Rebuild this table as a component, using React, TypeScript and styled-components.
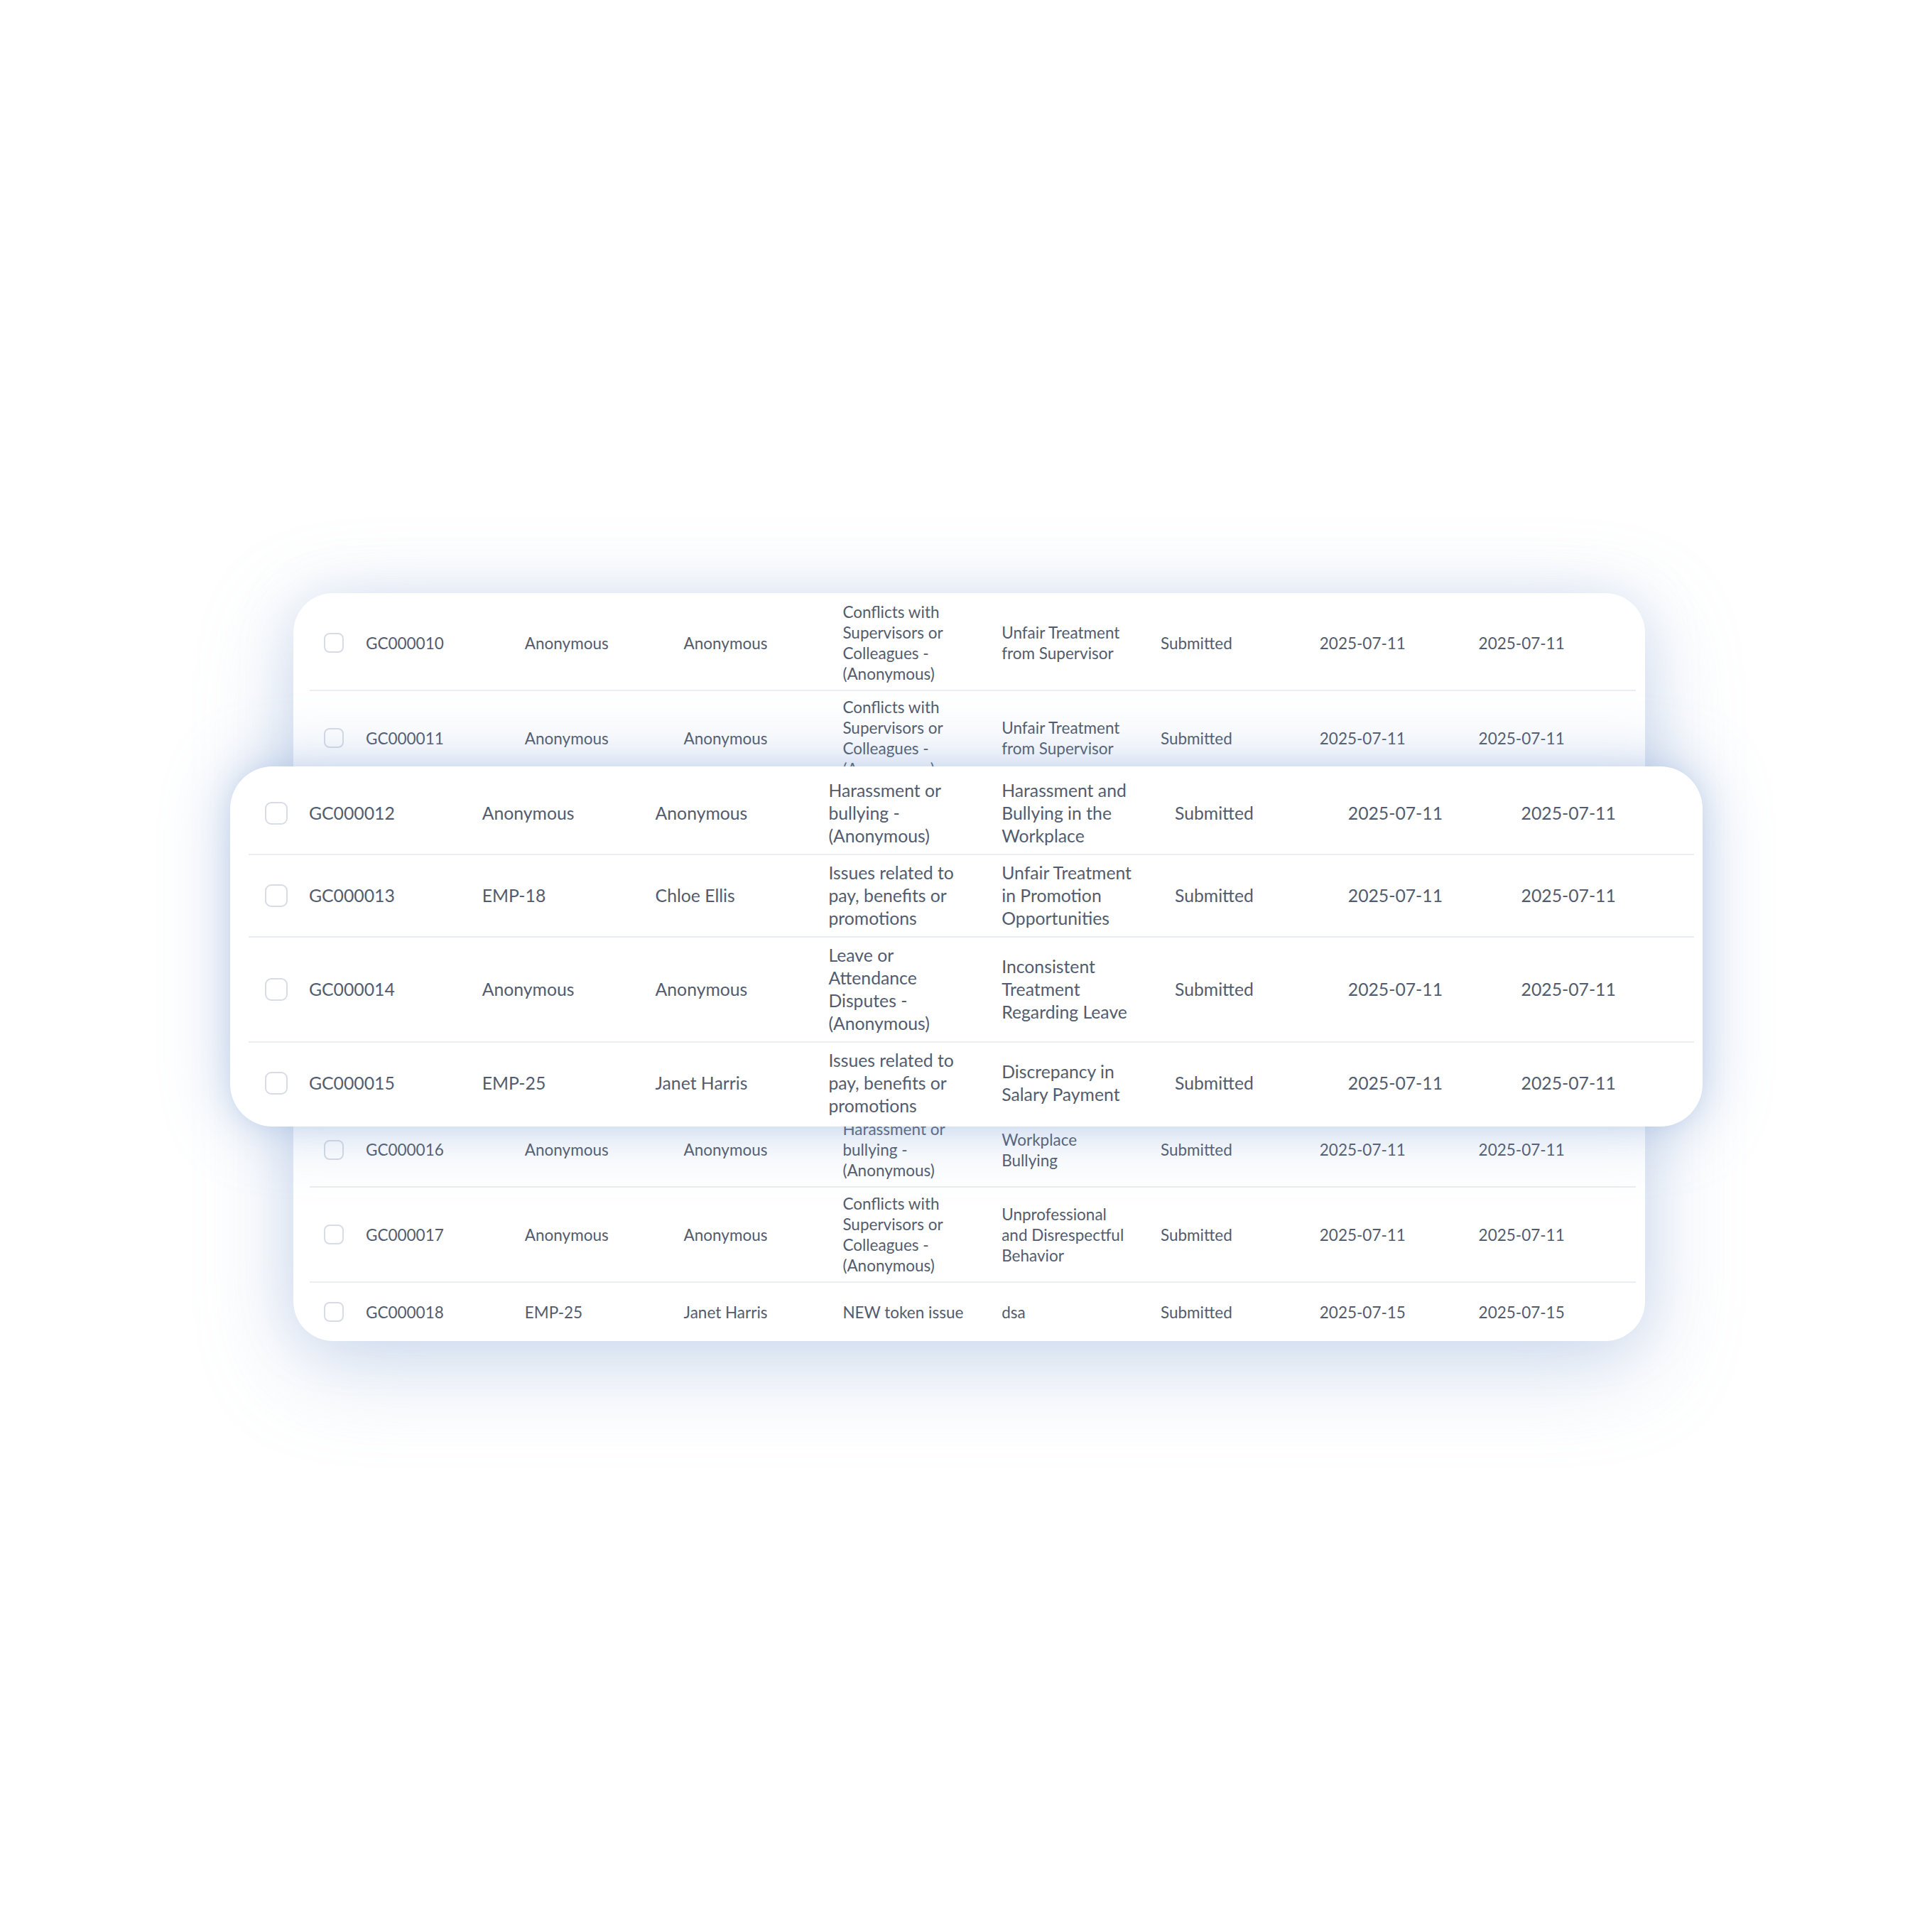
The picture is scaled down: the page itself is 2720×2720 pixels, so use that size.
import React from "react";
import styled, { createGlobalStyle } from "styled-components";

type Size = {
  font: number;
  line: number;
  col: number;
  checkCol: number;
  box: number;
  boxRadius: number;
  padY: number;
  padL: number;
  mL: number;
  mR: number;
  text: number;
  minH: number;
};

const BACK: Size = {
  font: 22.5,
  line: 29,
  col: 223.8,
  checkCol: 59,
  box: 28,
  boxRadius: 8,
  padY: 8,
  padL: 20,
  mL: 23,
  mR: 13,
  text: 180,
  minH: 82,
};

const FRONT: Size = {
  font: 24.75,
  line: 32,
  col: 243.8,
  checkCol: 62,
  box: 32,
  boxRadius: 9,
  padY: 9,
  padL: 23,
  mL: 26,
  mR: 12,
  text: 198,
  minH: 88,
};

type Grievance = {
  id: string;
  emp: string;
  name: string;
  category: string;
  subject: string;
  status: string;
  created: string;
  updated: string;
};

const CONFLICT = "Conflicts with Supervisors or Colleagues - (Anonymous)";
const HARASS = "Harassment or bullying - (Anonymous)";
const PAY = "Issues related to pay, benefits or promotions";

const rows: Grievance[] = [
  { id: "GC000010", emp: "Anonymous", name: "Anonymous", category: CONFLICT, subject: "Unfair Treatment from Supervisor", status: "Submitted", created: "2025-07-11", updated: "2025-07-11" },
  { id: "GC000011", emp: "Anonymous", name: "Anonymous", category: CONFLICT, subject: "Unfair Treatment from Supervisor", status: "Submitted", created: "2025-07-11", updated: "2025-07-11" },
  { id: "GC000012", emp: "Anonymous", name: "Anonymous", category: HARASS, subject: "Harassment and Bullying in the Workplace", status: "Submitted", created: "2025-07-11", updated: "2025-07-11" },
  { id: "GC000013", emp: "EMP-18", name: "Chloe Ellis", category: PAY, subject: "Unfair Treatment in Promotion Opportunities", status: "Submitted", created: "2025-07-11", updated: "2025-07-11" },
  { id: "GC000014", emp: "Anonymous", name: "Anonymous", category: "Leave or Attendance Disputes - (Anonymous)", subject: "Inconsistent Treatment Regarding Leave", status: "Submitted", created: "2025-07-11", updated: "2025-07-11" },
  { id: "GC000015", emp: "EMP-25", name: "Janet Harris", category: PAY, subject: "Discrepancy in Salary Payment", status: "Submitted", created: "2025-07-11", updated: "2025-07-11" },
  { id: "GC000016", emp: "Anonymous", name: "Anonymous", category: HARASS, subject: "Workplace Bullying", status: "Submitted", created: "2025-07-11", updated: "2025-07-11" },
  { id: "GC000017", emp: "Anonymous", name: "Anonymous", category: CONFLICT, subject: "Unprofessional and Disrespectful Behavior", status: "Submitted", created: "2025-07-11", updated: "2025-07-11" },
  { id: "GC000018", emp: "EMP-25", name: "Janet Harris", category: "NEW token issue", subject: "dsa", status: "Submitted", created: "2025-07-15", updated: "2025-07-15" },
];

const GlobalStyle = createGlobalStyle`
  html, body {
    margin: 0;
    padding: 0;
    background: #ffffff;
    overflow: hidden;
  }
  body {
    font-family: Lato, "Noto Sans", "Liberation Sans", sans-serif;
  }
`;

const Page = styled.div`
  width: 2720px;
  height: 2720px;
  display: flex;
  align-items: center;
  justify-content: center;
  background: #ffffff;
`;

const Stage = styled.div`
  position: relative;
  width: 1903px;
  margin-left: 9px;
  margin-top: 3px;
`;

const BackCard = styled.div`
  background: #ffffff;
  border-radius: 56px;
  padding: 4px 0 0;
  box-shadow: 0 36px 130px rgba(150, 176, 218, 0.42),
    0 0 70px rgba(185, 203, 232, 0.35);
`;

/* rows 12–15 of the back table: they sit under the magnified card */
const Covered = styled.div`
  visibility: hidden;
  padding: 7px 0 4px;
  border-bottom: 2px solid #eaedf2;
  margin: 0 13px 0 23px;
`;

const FrontCard = styled.div`
  position: absolute;
  left: -89px;
  top: 244px;
  width: 2073px;
  z-index: 1;
  background: #ffffff;
  border-radius: 60px;
  padding: 9px 0 4px;
  box-shadow: 0 0 95px rgba(120, 155, 210, 0.42),
    0 0 30px rgba(150, 178, 222, 0.25);
`;

const Row = styled.div<{ $s: Size; $flush?: boolean }>`
  display: grid;
  grid-template-columns: ${(p) => p.$s.checkCol}px repeat(7, ${(p) => p.$s.col}px) 1fr;
  align-items: center;
  min-height: ${(p) => p.$s.minH}px;
  box-sizing: border-box;
  margin: ${(p) => (p.$flush ? "0" : `0 ${p.$s.mR}px 0 ${p.$s.mL}px`)};
  padding: ${(p) => `${p.$s.padY}px 0 ${p.$s.padY}px ${p.$s.padL}px`};
  border-bottom: 2px solid #eaedf2;

  &:last-child {
    border-bottom: none;
  }
`;

const Cell = styled.div<{ $s: Size }>`
  box-sizing: border-box;
  padding-right: ${(p) => p.$s.col - p.$s.text}px;
  font-size: ${(p) => p.$s.font}px;
  line-height: ${(p) => p.$s.line}px;
  color: #525c6e;
  font-weight: 400;
  white-space: normal;
`;

const Check = styled.span<{ $s: Size }>`
  display: block;
  box-sizing: border-box;
  width: ${(p) => p.$s.box}px;
  height: ${(p) => p.$s.box}px;
  border: 2px solid #d7dce6;
  border-radius: ${(p) => p.$s.boxRadius}px;
  background: #ffffff;
`;

function TableRow({ g, s, flush }: { g: Grievance; s: Size; flush?: boolean }) {
  return (
    <Row $s={s} $flush={flush}>
      <Check $s={s} />
      <Cell $s={s}>{g.id}</Cell>
      <Cell $s={s}>{g.emp}</Cell>
      <Cell $s={s}>{g.name}</Cell>
      <Cell $s={s}>{g.category}</Cell>
      <Cell $s={s}>{g.subject}</Cell>
      <Cell $s={s}>{g.status}</Cell>
      <Cell $s={s}>{g.created}</Cell>
      <Cell $s={s}>{g.updated}</Cell>
    </Row>
  );
}

export default function App() {
  const before = rows.slice(0, 2);
  const focus = rows.slice(2, 6);
  const after = rows.slice(6);
  return (
    <Page>
      <GlobalStyle />
      <Stage>
        <BackCard>
          {before.map((g) => (
            <TableRow key={g.id} g={g} s={BACK} />
          ))}
          <Covered aria-hidden="true">
            {focus.map((g) => (
              <TableRow key={g.id} g={g} s={BACK} flush />
            ))}
          </Covered>
          {after.map((g) => (
            <TableRow key={g.id} g={g} s={BACK} />
          ))}
        </BackCard>
        <FrontCard>
          {focus.map((g) => (
            <TableRow key={g.id} g={g} s={FRONT} />
          ))}
        </FrontCard>
      </Stage>
    </Page>
  );
}
